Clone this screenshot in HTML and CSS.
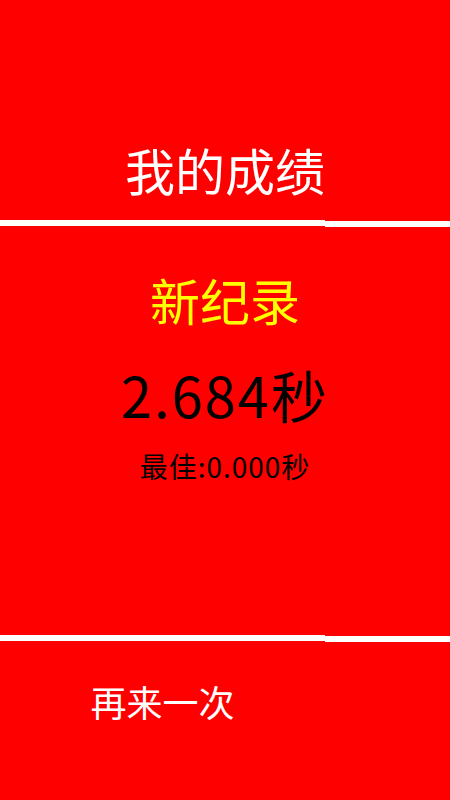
FILE: index.html
```html
<!DOCTYPE html>
<html lang="zh-CN">
<head>
<meta charset="utf-8">
<title>我的成绩</title>
<link rel="stylesheet" href="styles.css">
</head>
<body>
<div class="screen">
  <header class="header">
    <h1 class="title">我的成绩</h1>
  </header>
  <div class="divider">
    <div class="seg seg-left"></div>
    <div class="seg seg-right"></div>
  </div>
  <main class="result">
    <div class="record">新纪录</div>
    <div class="time">2.684秒</div>
    <div class="best">最佳:0.000秒</div>
  </main>
  <div class="divider">
    <div class="seg seg-left"></div>
    <div class="seg seg-right"></div>
  </div>
  <footer class="footer">
    <div class="action">
      <span class="retry">再来一次</span>
    </div>
    <div class="action-right"></div>
  </footer>
</div>
</body>
</html>
```
FILE: styles.css
```css
* {
  box-sizing: border-box;
}
html, body {
  margin: 0;
  padding: 0;
}
body {
  background: #ff0000;
  font-family: "Noto Sans CJK SC", "Noto Sans", sans-serif;
}
.screen {
  width: 450px;
  height: 800px;
  display: flex;
  flex-direction: column;
  background: #ff0000;
  overflow: hidden;
}
.header {
  height: 220px;
  padding-top: 144px;
  display: flex;
  justify-content: center;
}
.title {
  margin: 0;
  font-size: 50px;
  line-height: 1;
  font-weight: normal;
  color: #ffffff;
}
.divider {
  height: 7px;
  display: flex;
  flex-shrink: 0;
}
.seg {
  height: 6px;
  background: #ffffff;
}
.seg-left {
  width: 325px;
}
.seg-right {
  flex: 1;
  margin-top: 1px;
}
.result {
  height: 408px;
  display: flex;
  flex-direction: column;
  align-items: center;
  padding-top: 47px;
}
.record {
  font-size: 50px;
  line-height: 1;
  color: #ffff00;
}
.time {
  margin-top: 42px;
  font-size: 56px;
  line-height: 1;
  letter-spacing: 2px;
  color: #000000;
}
.best {
  margin-top: 30px;
  font-size: 28px;
  line-height: 1;
  letter-spacing: 1px;
  color: #000000;
}
.footer {
  flex: 1;
  display: flex;
}
.action {
  width: 325px;
  display: flex;
  justify-content: center;
  padding-top: 41px;
}
.action-right {
  flex: 1;
}
.retry {
  font-size: 36px;
  line-height: 1;
  color: #ffffff;
}
```
